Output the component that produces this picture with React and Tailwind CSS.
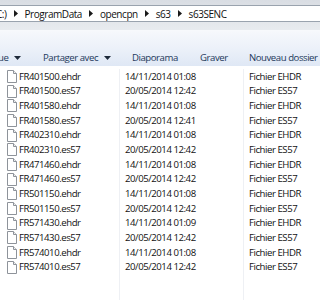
import React from "react";

const files = [
  ["FR401500.ehdr", "14/11/2014 01:08", "Fichier EHDR"],
  ["FR401500.es57", "20/05/2014 12:42", "Fichier ES57"],
  ["FR401580.ehdr", "14/11/2014 01:08", "Fichier EHDR"],
  ["FR401580.es57", "20/05/2014 12:41", "Fichier ES57"],
  ["FR402310.ehdr", "14/11/2014 01:08", "Fichier EHDR"],
  ["FR402310.es57", "20/05/2014 12:42", "Fichier ES57"],
  ["FR471460.ehdr", "14/11/2014 01:08", "Fichier EHDR"],
  ["FR471460.es57", "20/05/2014 12:42", "Fichier ES57"],
  ["FR501150.ehdr", "14/11/2014 01:08", "Fichier EHDR"],
  ["FR501150.es57", "20/05/2014 12:42", "Fichier ES57"],
  ["FR571430.ehdr", "14/11/2014 01:09", "Fichier EHDR"],
  ["FR571430.es57", "20/05/2014 12:42", "Fichier ES57"],
  ["FR574010.ehdr", "14/11/2014 01:08", "Fichier EHDR"],
  ["FR574010.es57", "20/05/2014 12:42", "Fichier ES57"],
];

const Arrow = () => (
  <svg width="4" height="7" viewBox="0 0 4 7" className="mx-[7px] shrink-0">
    <path d="M0 0 L4 3.5 L0 7 Z" fill="#1a1a1a" />
  </svg>
);

const Caret = () => (
  <svg width="7" height="4" viewBox="0 0 7 4" className="ml-[6px] shrink-0">
    <path d="M0 0 L7 0 L3.5 4 Z" fill="#1e2a3a" />
  </svg>
);

const FileIcon = () => (
  <svg width="10" height="13" viewBox="0 0 10 13" className="shrink-0">
    <path d="M0.5 0.5 H6.5 L9.5 3.5 V12.5 H0.5 Z" fill="#ffffff" stroke="#8e939a" />
    <path d="M6.5 0.5 V3.5 H9.5" fill="#eeeeee" stroke="#8e939a" />
  </svg>
);

export default function App() {
  return (
    <div
      className="relative h-[300px] w-[320px] overflow-hidden bg-white text-[9.6px] tracking-[-0.45px] text-[#111111]"
      style={{ fontFamily: '"Open Sans", "Noto Sans", sans-serif' }}
    >
      {/* address strip */}
      <div className="bg-gradient-to-b from-[#d9dde3] to-[#e8ebef] pt-[5px] pb-[8px]">
        <div className="flex h-[17px] items-center whitespace-nowrap border-y border-[#9aa3ae] bg-white text-[10px] leading-none">
          <span className="ml-[-4px]">C:)</span>
          <Arrow />
          <span>ProgramData</span>
          <Arrow />
          <span>opencpn</span>
          <Arrow />
          <span>s63</span>
          <Arrow />
          <span>s63SENC</span>
        </div>
      </div>

      {/* command bar */}
      <div className="flex h-[36px] items-end whitespace-nowrap border-t border-[#f7f9fc] bg-gradient-to-b from-[#f6f8fc] via-[#ecf1f9] to-[#dfe8f5] pb-[3px] leading-none text-[#1e395b]">
        <div className="ml-[-2px] flex w-[45px] shrink-0 items-center">
          <span>ue</span>
          <Caret />
        </div>
        <div className="flex w-[89px] shrink-0 items-center">
          <span>Partager avec</span>
          <Caret />
        </div>
        <span className="w-[68px] shrink-0">Diaporama</span>
        <span className="w-[49px] shrink-0">Graver</span>
        <span>Nouveau dossier</span>
      </div>

      {/* list */}
      <div className="flex pt-[3px] leading-none whitespace-nowrap">
        <div className="h-[240px] w-[120px] shrink-0 border-r border-[#eef0f4]">
          {files.map((f) => (
            <div key={f[0]} className="flex h-[14.7px] items-center pl-[7px]">
              <FileIcon />
              <span className="ml-[2px]">{f[0]}</span>
            </div>
          ))}
        </div>
        <div className="w-[124px] shrink-0 border-r border-[#eef0f4]">
          {files.map((f) => (
            <div key={f[0]} className="flex h-[14.7px] items-center pl-[5px]">
              {f[1]}
            </div>
          ))}
        </div>
        <div>
          {files.map((f) => (
            <div key={f[0]} className="flex h-[14.7px] items-center pl-[5px]">
              {f[2]}
            </div>
          ))}
        </div>
      </div>
    </div>
  );
}
